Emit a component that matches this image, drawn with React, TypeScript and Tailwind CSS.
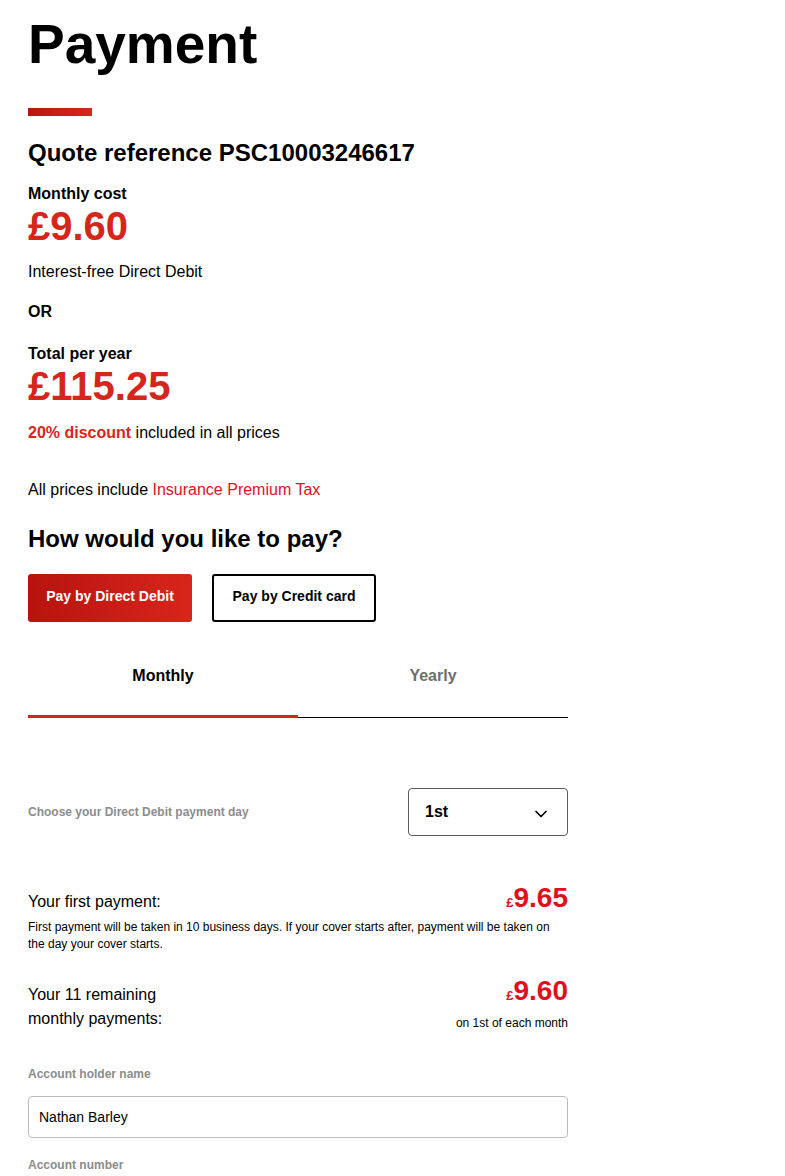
import { ChevronDown } from 'lucide-react'

export default function App() {
  return (
    <div className="min-h-screen bg-white px-7 pt-4 text-black font-['Liberation_Sans',Arial,sans-serif]">
      <h1 className="text-[55px] leading-[56px] font-bold">Payment</h1>
      <div className="mt-9 h-2 w-16 bg-gradient-to-r from-[#b8160f] to-[#d8261c]" />

      <h2 className="mt-[21px] text-2xl leading-8 font-bold">Quote reference PSC10003246617</h2>

      <p className="mt-[13px] text-base leading-6 font-bold">Monthly cost</p>
      <p className="text-[40px] leading-10 font-bold text-[#d6261c]">£9.60</p>
      <p className="mt-3.5 text-base leading-6">Interest-free Direct Debit</p>
      <p className="mt-4 text-base leading-6 font-bold">OR</p>

      <p className="mt-[18px] text-base leading-6 font-bold">Total per year</p>
      <p className="text-[40px] leading-10 font-bold text-[#d6261c]">£115.25</p>
      <p className="mt-[15px] text-base leading-6">
        <span className="font-bold text-[#d6261c]">20% discount</span> included in all prices
      </p>

      <p className="mt-[33px] text-base leading-6">
        All prices include <span className="text-[#e0101e]">Insurance Premium Tax</span>
      </p>

      <h2 className="mt-[21px] text-2xl leading-8 font-bold">How would you like to pay?</h2>

      <div className="mt-[19px] flex gap-5">
        <button className="h-12 w-[164px] rounded-[3px] bg-gradient-to-r from-[#b8130e] to-[#d8251c] pb-1 text-sm font-bold text-white">
          Pay by Direct Debit
        </button>
        <button className="h-12 w-[164px] rounded-[3px] border-2 border-black bg-white pb-1 text-sm font-bold text-black">
          Pay by Credit card
        </button>
      </div>

      <div className="mt-[18px] w-[540px]">
        <div className="flex">
          <div className="flex-1 pt-6 pb-[27px] text-center text-base leading-6 font-bold">Monthly</div>
          <div className="flex-1 pt-6 pb-[27px] text-center text-base leading-6 font-bold text-[#6e6e6e]">Yearly</div>
        </div>
        <div className="flex items-end">
          <div className="h-[3px] flex-1 bg-[#d6261c]" />
          <div className="h-px flex-1 bg-black" />
        </div>

        <div className="mt-[70px] flex items-center justify-between">
          <span className="text-xs font-bold text-[#8c8c8c]">Choose your Direct Debit payment day</span>
          <div className="flex h-12 w-40 items-center justify-between rounded border border-[#5a5a5a] pl-4 pr-4">
            <span className="text-base font-bold">1st</span>
            <ChevronDown size={20} strokeWidth={2} className="mt-1" />
          </div>
        </div>

        <div className="mt-12 flex items-baseline justify-between">
          <span className="text-base leading-6">Your first payment:</span>
          <span className="font-bold text-[#e0101e]">
            <span className="text-[13px]">£</span>
            <span className="text-[28px] leading-7">9.65</span>
          </span>
        </div>
        <p className="mt-[5px] text-xs leading-[17px]">
          First payment will be taken in 10 business days. If your cover starts after, payment will be taken on the day your cover starts.
        </p>

        <div className="mt-6 flex items-start justify-between">
          <p className="w-[150px] pt-1.5 text-base leading-6">Your 11 remaining monthly payments:</p>
          <div className="flex flex-col items-end">
            <span className="font-bold text-[#e0101e]">
              <span className="text-[13px]">£</span>
              <span className="text-[28px] leading-7">9.60</span>
            </span>
            <span className="mt-2 text-xs leading-4">on 1st of each month</span>
          </div>
        </div>

        <p className="mt-[35px] text-xs leading-4 font-bold text-[#8c8c8c]">Account holder name</p>
        <div className="mt-[14px] flex h-[42px] items-center rounded border border-[#bdbdbd] px-[10px] text-sm">
          Nathan Barley
        </div>
        <p className="mt-[19px] text-xs leading-4 font-bold text-[#8c8c8c]">Account number</p>
      </div>
    </div>
  )
}
